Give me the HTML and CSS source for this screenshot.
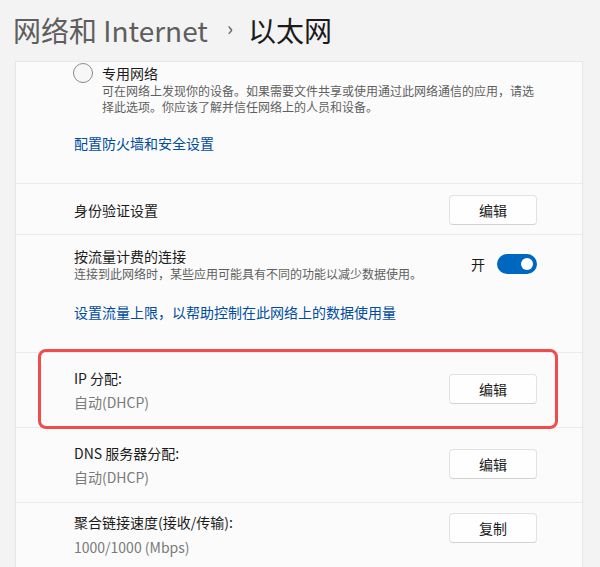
FILE: index.html
```html
<!DOCTYPE html>
<html lang="zh-CN">
<head>
<meta charset="utf-8">
<title>以太网</title>
<link rel="stylesheet" href="styles.css">
</head>
<body>
<header class="page-title">
  <span class="crumb">网络和 Internet</span>
  <span class="sep">›</span>
  <span class="current">以太网</span>
</header>

<main class="card">
  <section class="group profile">
    <div class="radio-row">
      <span class="radio"></span>
      <div class="radio-text">
        <div class="label">专用网络</div>
        <div class="desc">可在网络上发现你的设备。如果需要文件共享或使用通过此网络通信的应用，请选择此选项。你应该了解并信任网络上的人员和设备。</div>
      </div>
    </div>
    <a class="link" href="#">配置防火墙和安全设置</a>
  </section>

  <section class="group row auth">
    <div class="label">身份验证设置</div>
    <button class="btn">编辑</button>
  </section>

  <section class="group metered">
    <div class="row-inner">
      <div>
        <div class="label tight">按流量计费的连接</div>
        <div class="desc metered-desc">连接到此网络时，某些应用可能具有不同的功能以减少数据使用。</div>
      </div>
      <div class="toggle-wrap">
        <span class="toggle-state">开</span>
        <span class="toggle"><span class="knob"></span></span>
      </div>
    </div>
    <a class="link" href="#">设置流量上限，以帮助控制在此网络上的数据使用量</a>
  </section>

  <section class="group row prop ip">
    <div>
      <div class="label">IP 分配:</div>
      <div class="value">自动(DHCP)</div>
    </div>
    <button class="btn">编辑</button>
    <span class="highlight"></span>
  </section>

  <section class="group row prop">
    <div>
      <div class="label">DNS 服务器分配:</div>
      <div class="value">自动(DHCP)</div>
    </div>
    <button class="btn">编辑</button>
  </section>

  <section class="group props">
    <div class="props-list">
      <div class="label">聚合链接速度(接收/传输):</div>
      <div class="value">1000/1000 (Mbps)</div>
      <div class="label">链接本地 IPv6 地址:</div>
      <div class="value">fe80::1c2a:5b3e:9d41:7f20%12</div>
    </div>
    <button class="btn">复制</button>
  </section>
</main>
</body>
</html>
```

FILE: styles.css
```css
* {
  box-sizing: border-box;
}

html, body {
  margin: 0;
  height: 100%;
  overflow: hidden;
}

body {
  background: #f3f3f3;
  font-family: "Noto Sans", "Noto Sans CJK SC", sans-serif;
  color: #1b1b1b;
}

/* breadcrumb title */
.page-title {
  height: 61px;
  display: flex;
  align-items: center;
  padding: 0 0 2px 13px;
  font-size: 28px;
  line-height: 34px;
  font-family: "Noto Sans CJK SC", sans-serif;
}

.crumb {
  color: #5e5e5e;
}

.sep {
  color: #5e5e5e;
  font-size: 20px;
  margin: 0 15px 0 19px;
  position: relative;
  top: -2px;
}

.current {
  color: #1b1b1b;
}

/* settings card */
.card {
  margin: 0 17px 0 15px;
  background: #fbfbfb;
  border: 1px solid #e6e6e6;
  border-bottom: none;
  min-height: 600px;
}

.group {
  position: relative;
  border-bottom: 1px solid #ebebeb;
  padding: 0 45px 0 58px;
}

.row {
  display: flex;
  align-items: center;
  justify-content: space-between;
}

.label {
  font-family: "Noto Sans CJK SC", sans-serif;
  font-size: 14px;
  line-height: 20px;
  color: #1b1b1b;
}

.label.tight {
  line-height: 18px;
}

.desc {
  font-family: "Noto Sans CJK SC", sans-serif;
  font-size: 12px;
  line-height: 16px;
  color: #5f5f5f;
}

.metered-desc {
  margin-top: 1px;
}

.value {
  font-family: "Noto Sans CJK SC", sans-serif;
  font-size: 14px;
  line-height: 20px;
  color: #7a7a7a;
  margin-top: 4px;
}

.link {
  display: block;
  font-family: "Noto Sans CJK SC", sans-serif;
  font-size: 14px;
  line-height: 20px;
  color: #004c9f;
  text-decoration: none;
}

/* network profile radio */
.profile {
  padding-top: 1px;
  padding-bottom: 30px;
  padding-left: 58px;
}

.profile .link {
  margin-top: 18px;
}

.radio-row {
  display: flex;
  align-items: flex-start;
  margin-left: -1px;
}

.radio {
  flex: none;
  width: 20px;
  height: 20px;
  border: 1px solid #8a8a8a;
  border-radius: 50%;
  background: #f7f7f7;
  margin-right: 9px;
}

/* buttons */
.btn {
  flex: none;
  width: 88px;
  height: 30px;
  border: 1px solid #e2e2e2;
  border-bottom-color: #d2d2d2;
  border-radius: 4px;
  background: #fefefe;
  font-family: "Noto Sans CJK SC", sans-serif;
  font-size: 14px;
  color: #1b1b1b;
  padding: 0;
}

.auth {
  height: 51px;
  padding-top: 1px;
}

/* metered connection */
.metered {
  padding-top: 12px;
  padding-bottom: 30px;
}

.row-inner {
  display: flex;
  align-items: center;
  justify-content: space-between;
}

.metered .link {
  margin-top: 20px;
}

.toggle-wrap {
  display: flex;
  align-items: center;
  gap: 12px;
  margin-top: -1px;
}

.toggle-state {
  font-family: "Noto Sans CJK SC", sans-serif;
  font-size: 14px;
  line-height: 20px;
  color: #1b1b1b;
}

.toggle {
  display: flex;
  align-items: center;
  justify-content: flex-end;
  width: 40px;
  height: 20px;
  border-radius: 10px;
  background: #0067c0;
  padding-right: 4px;
}

.knob {
  width: 12px;
  height: 12px;
  border-radius: 50%;
  background: #ffffff;
}

/* property rows */
.prop {
  height: 75px;
  padding-top: 0;
}

.prop .btn {
  margin-top: -2px;
}

.props {
  display: flex;
  align-items: flex-start;
  justify-content: space-between;
  padding-top: 9px;
}

.props .btn {
  margin-top: 1px;
}

.props-list .value {
  margin-top: 5px;
  margin-bottom: 6px;
}

/* red outline drawn over the IP row */
.highlight {
  position: absolute;
  top: -4px;
  bottom: -2px;
  left: 22px;
  right: 24px;
  border: 3px solid #f24b4b;
  border-radius: 8px;
  pointer-events: none;
}
```
